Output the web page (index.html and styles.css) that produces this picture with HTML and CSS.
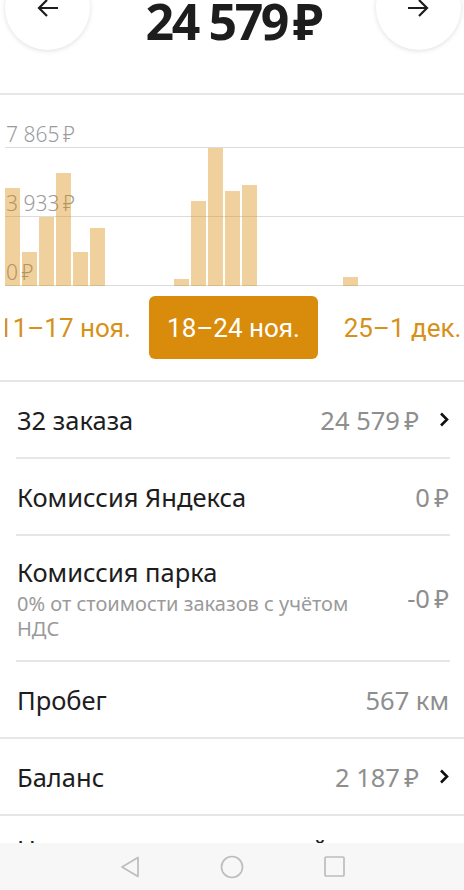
FILE: index.html
```html
<!DOCTYPE html>
<html lang="ru">

<head>
    <meta charset="utf-8">
    <meta name="viewport" content="width=device-width, initial-scale=1.0">
    <title>Заработок</title>
    <link rel="stylesheet" href="styles.css">
</head>

<body>
    <div class="top">
        <button class="round" aria-label="Назад">
            <svg width="22" height="18" viewBox="0 0 22 18"><path d="M21 9H2M10 1L2 9l8 8" fill="none" stroke="#1c1c1c" stroke-width="2.2"/></svg>
        </button>
        <div class="total">24 579&#8201;₽</div>
        <button class="round" aria-label="Вперёд">
            <svg width="22" height="18" viewBox="0 0 22 18"><path d="M1 9h19M12 1l8 8-8 8" fill="none" stroke="#1c1c1c" stroke-width="2.2"/></svg>
        </button>
    </div>
    <div class="sep"></div>

    <section class="chart">
        <div class="plot">
            <div class="grid-row first"><span>7 865&#8201;₽</span></div>
            <div class="grid-row"><span>3 933&#8201;₽</span></div>
            <div class="grid-row"><span>0&#8201;₽</span></div>
            <div class="bars">
                <div class="week">
                    <i style="height:98px"></i><i style="height:34px"></i><i style="height:69px"></i><i style="height:113px"></i><i style="height:34px"></i><i style="height:58px"></i><i style="height:0"></i>
                </div>
                <div class="week">
                    <i style="height:7px"></i><i style="height:85px"></i><i style="height:138px"></i><i style="height:95px"></i><i style="height:101px"></i><i style="height:0"></i><i style="height:0"></i>
                </div>
                <div class="week">
                    <i style="height:9px"></i><i style="height:0"></i><i style="height:0"></i><i style="height:0"></i><i style="height:0"></i><i style="height:0"></i><i style="height:0"></i>
                </div>
            </div>
        </div>
        <div class="weeks">
            <div class="week-label">11–17 ноя.</div>
            <div class="week-label active">18–24 ноя.</div>
            <div class="week-label">25–1 дек.</div>
        </div>
    </section>
    <div class="sep"></div>

    <ul class="list">
        <li>
            <span class="name">32 заказа</span>
            <span class="value">24 579&#8201;₽</span>
            <svg class="chevron" width="10" height="15" viewBox="0 0 10 15"><path d="M2 1.5l6 6-6 6" fill="none" stroke="#111" stroke-width="2.6"/></svg>
        </li>
        <li>
            <span class="name">Комиссия Яндекса</span>
            <span class="value">0&#8201;₽</span>
        </li>
        <li class="tall">
            <span class="name">Комиссия парка
                <small>0% от стоимости заказов с учётом НДС</small>
            </span>
            <span class="value">-0&#8201;₽</span>
        </li>
        <li class="full">
            <span class="name">Пробег</span>
            <span class="value">567 км</span>
        </li>
        <li class="full">
            <span class="name">Баланс</span>
            <span class="value">2 187&#8201;₽</span>
            <svg class="chevron" width="10" height="15" viewBox="0 0 10 15"><path d="M2 1.5l6 6-6 6" fill="none" stroke="#111" stroke-width="2.6"/></svg>
        </li>
        <li class="hidden-row">
            <span class="name">Начисления за прошлый</span>
        </li>
    </ul>

    <nav class="sysnav">
        <svg width="20" height="22" viewBox="0 0 20 22"><path d="M18 1.5v19L2 11z" fill="none" stroke="#bdbdbd" stroke-width="1.7" stroke-linejoin="round"/></svg>
        <svg width="24" height="24" viewBox="0 0 24 24"><circle cx="12" cy="12" r="10.5" fill="none" stroke="#bdbdbd" stroke-width="1.7"/></svg>
        <svg width="21" height="21" viewBox="0 0 21 21"><rect x="1" y="1" width="19" height="19" rx="1" fill="none" stroke="#bdbdbd" stroke-width="1.7"/></svg>
    </nav>
</body>

</html>
```

FILE: styles.css
```css
body {
    background: #fff;
    color: #1d1d1d;
    font-family: "Noto Sans", "Open Sans", sans-serif;
    margin: 0;
    overflow: hidden;
}

.top {
    align-items: flex-start;
    display: flex;
    height: 128px;
    justify-content: space-between;
    margin-top: -35px;
    padding: 0 3px 0 5px;
    box-sizing: border-box;
}

.round {
    align-items: center;
    background: #fff;
    border: 0;
    border-radius: 50%;
    box-shadow: 0 1px 5px rgba(0, 0, 0, 0.13);
    display: flex;
    height: 85px;
    justify-content: center;
    padding: 0;
    width: 85px;
}

.round svg {
    margin-top: 1px;
}

.total {
    font-size: 50px;
    font-weight: 700;
    letter-spacing: -2.4px;
    line-height: 40px;
    margin-top: 36px;
}

.sep {
    background: #e6e6e6;
    height: 2px;
}

.chart {
    margin-left: 5px;
    overflow: hidden;
}

.plot {
    position: relative;
}

.grid-row {
    align-items: flex-end;
    border-bottom: 1px solid #dcdcdc;
    box-sizing: border-box;
    color: #9b9b9b;
    display: flex;
    font-size: 21px;
    font-weight: 300;
    height: 69px;
    line-height: 21px;
    padding: 0 0 2px 1px;
}

.grid-row.first {
    height: 53px;
}

.bars {
    bottom: 0;
    display: flex;
    gap: 52px;
    left: 0;
    position: absolute;
}

.week {
    align-items: flex-end;
    display: flex;
    gap: 2px;
}

.week i {
    background: rgba(217, 140, 10, 0.4);
    display: block;
    width: 15px;
}

.weeks {
    display: flex;
    height: 63px;
    margin: 10px 0 21px -25px;
}

.week-label {
    align-items: center;
    border-radius: 6px;
    color: #d6911a;
    display: flex;
    flex: 0 0 169px;
    font-family: Roboto, sans-serif;
    font-size: 26px;
    justify-content: center;
    white-space: nowrap;
}

.week-label.active {
    background: #d98c0b;
    color: #fff;
}

.list {
    list-style: none;
    margin: 0;
    padding: 0;
}

.list li {
    align-items: center;
    border-bottom: 2px solid #e6e6e6;
    display: flex;
    font-size: 25.5px;
    height: 75px;
    margin: 0 14px 0 16px;
    padding: 0 1px;
    white-space: nowrap;
}

.list li.tall {
    height: 124px;
}

.list li.full {
    margin: 0;
    padding: 0 15px 0 17px;
}

.list li.hidden-row {
    align-items: flex-start;
    box-sizing: border-box;
    padding-top: 16px;
}

.name {
    flex: 1;
}

.name small {
    color: #9a9a9a;
    display: block;
    font-size: 20px;
    line-height: 25px;
    margin-top: 2px;
    padding-right: 40px;
    white-space: normal;
}

.value {
    color: #8e8e8e;
}

.chevron {
    margin-left: 20px;
}

.sysnav {
    align-items: center;
    background: #f7f7f7;
    bottom: 0;
    display: flex;
    gap: 80px;
    height: 47px;
    justify-content: center;
    left: 0;
    position: fixed;
    right: 0;
}
```
